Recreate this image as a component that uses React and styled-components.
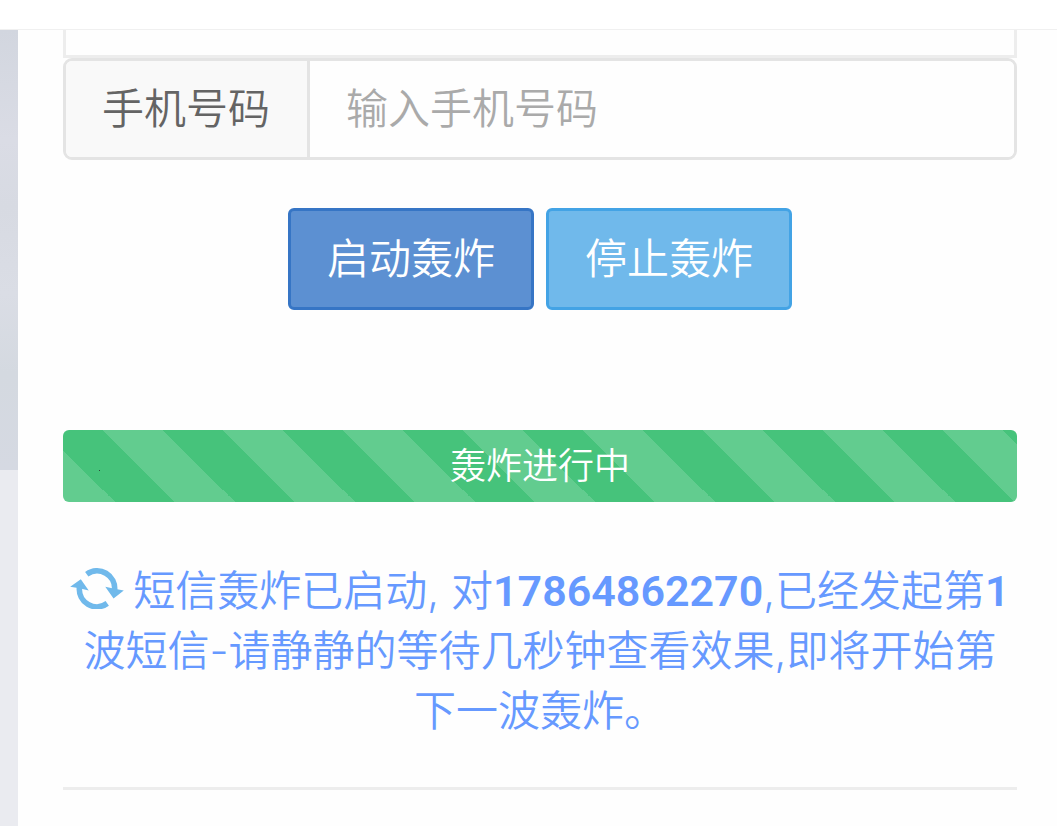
import React from 'react';
import styled, { createGlobalStyle, css } from 'styled-components';

const GlobalStyle = createGlobalStyle`
    *, *::before, *::after {
        box-sizing: border-box;
    }
    body {
        margin: 0;
        background: #eaebf0;
        color: #646464;
        font-family: Inter, 'Noto Sans CJK SC', sans-serif;
        font-size: 42px;
        font-weight: 350;
        line-height: 60px;
    }
    button, input {
        font: inherit;
    }
`;

const Page = styled.div`
    display: flex;
    flex-direction: column;
    min-height: 100vh;
`;

const TopBar = styled.header`
    height: 30px;
    background: #fff;
    border-bottom: 1px solid #f0f0f0;
`;

const Body = styled.div`
    flex: 1;
    display: flex;
    padding-left: 18px;
    background: linear-gradient(#d2d6df, #dadce5 25%, #d7dae2 40%, #dadde5 60%, #d4d9e0 78%, #d5d9e2) no-repeat 0 0 / 100% 440px;
`;

const Card = styled.main`
    flex: 1;
    min-width: 0;
    padding: 0 40px 36px 45px;
    background: #fefefe;
`;

const PanelEnd = styled.div`
    height: 28px;
    border: 3px solid #ededed;
    border-top: 0;
`;

const InputGroup = styled.div`
    display: flex;
    border: 3px solid #e4e4e4;
    border-radius: 9px;
    overflow: hidden;
`;

const Addon = styled.label`
    padding: 18px 37px 18px 36px;
    background: #f9f9f9;
    border-right: 3px solid #e4e4e4;
    white-space: nowrap;
`;

const PhoneInput = styled.input`
    flex: 1;
    min-width: 0;
    padding: 18px 36px;
    border: 0;
    outline: 0;
    background: #fefefe;
    color: #646464;
    &::placeholder {
        color: #aaa;
        opacity: 1;
    }
`;

const Actions = styled.div`
    display: flex;
    justify-content: center;
    gap: 12px;
    margin-top: 48px;
`;

const variants = {
    primary: css`
        background: #5c90d2;
        border-color: #3675c5;
    `,
    info: css`
        background: #70b9eb;
        border-color: #43a3e5;
    `
};

const Button = styled.button`
    padding: 18px 36px;
    border: 3px solid;
    border-radius: 6px;
    color: #fff;
    cursor: pointer;
    ${({ $variant }) => variants[$variant]}
`;

const Progress = styled.div`
    position: relative;
    height: 72px;
    margin-top: 120px;
    border-radius: 6px;
    background: #46c37b
        linear-gradient(
            45deg,
            rgba(255, 255, 255, 0.15) 25%,
            transparent 25%,
            transparent 50%,
            rgba(255, 255, 255, 0.15) 50%,
            rgba(255, 255, 255, 0.15) 75%,
            transparent 75%
        )
        40px 0 / 120px 120px;
    color: #fff;
    font-size: 36px;
    line-height: 72px;
    text-align: center;
    &::before {
        content: '';
        position: absolute;
        top: 40px;
        left: 36px;
        width: 1px;
        height: 1px;
        background: #2b4a3a;
    }
`;

const Message = styled.p`
    margin: 59px 0 46px;
    color: #69f;
    text-align: center;
    b {
        font-family: Roboto, sans-serif;
        font-size: 43px;
        font-weight: 600;
        line-height: 1;
    }
`;

const Refresh = styled.svg`
    width: 54px;
    height: 41px;
    margin-right: 9px;
    vertical-align: -3px;
`;

const Divider = styled.hr`
    height: 3px;
    margin: 0;
    border: 0;
    background: #ededed;
`;

const RefreshIcon = () => (
    <Refresh viewBox="0 0 162 124" aria-hidden="true">
        <g fill="none" stroke="#70b9eb" strokeWidth="17">
            <path d="M50 19A53 53 0 0 1 134 68" />
            <path d="M112 107A53 53 0 0 1 28 58" />
        </g>
        <g fill="#70b9eb">
            <path d="M106 57L134 63L162 68L131 92Z" />
            <path d="M56 68L28 61L0 57L32 34Z" />
        </g>
    </Refresh>
);

export default function App() {
    return (
        <Page>
            <GlobalStyle />
            <TopBar />
            <Body>
                <Card>
                    <PanelEnd />
                    <InputGroup>
                        <Addon htmlFor="phone">手机号码</Addon>
                        <PhoneInput id="phone" type="tel" placeholder="输入手机号码" />
                    </InputGroup>
                    <Actions>
                        <Button type="button" $variant="primary">
                            启动轰炸
                        </Button>
                        <Button type="button" $variant="info">
                            停止轰炸
                        </Button>
                    </Actions>
                    <Progress role="progressbar">轰炸进行中</Progress>
                    <Message>
                        <RefreshIcon />
                        短信轰炸已启动, 对<b>17864862270</b>,已经发起第<b>1</b>
                        波短信-请静静的等待几秒钟查看效果,即将开始第下一波轰炸。
                    </Message>
                    <Divider />
                </Card>
            </Body>
        </Page>
    );
}
